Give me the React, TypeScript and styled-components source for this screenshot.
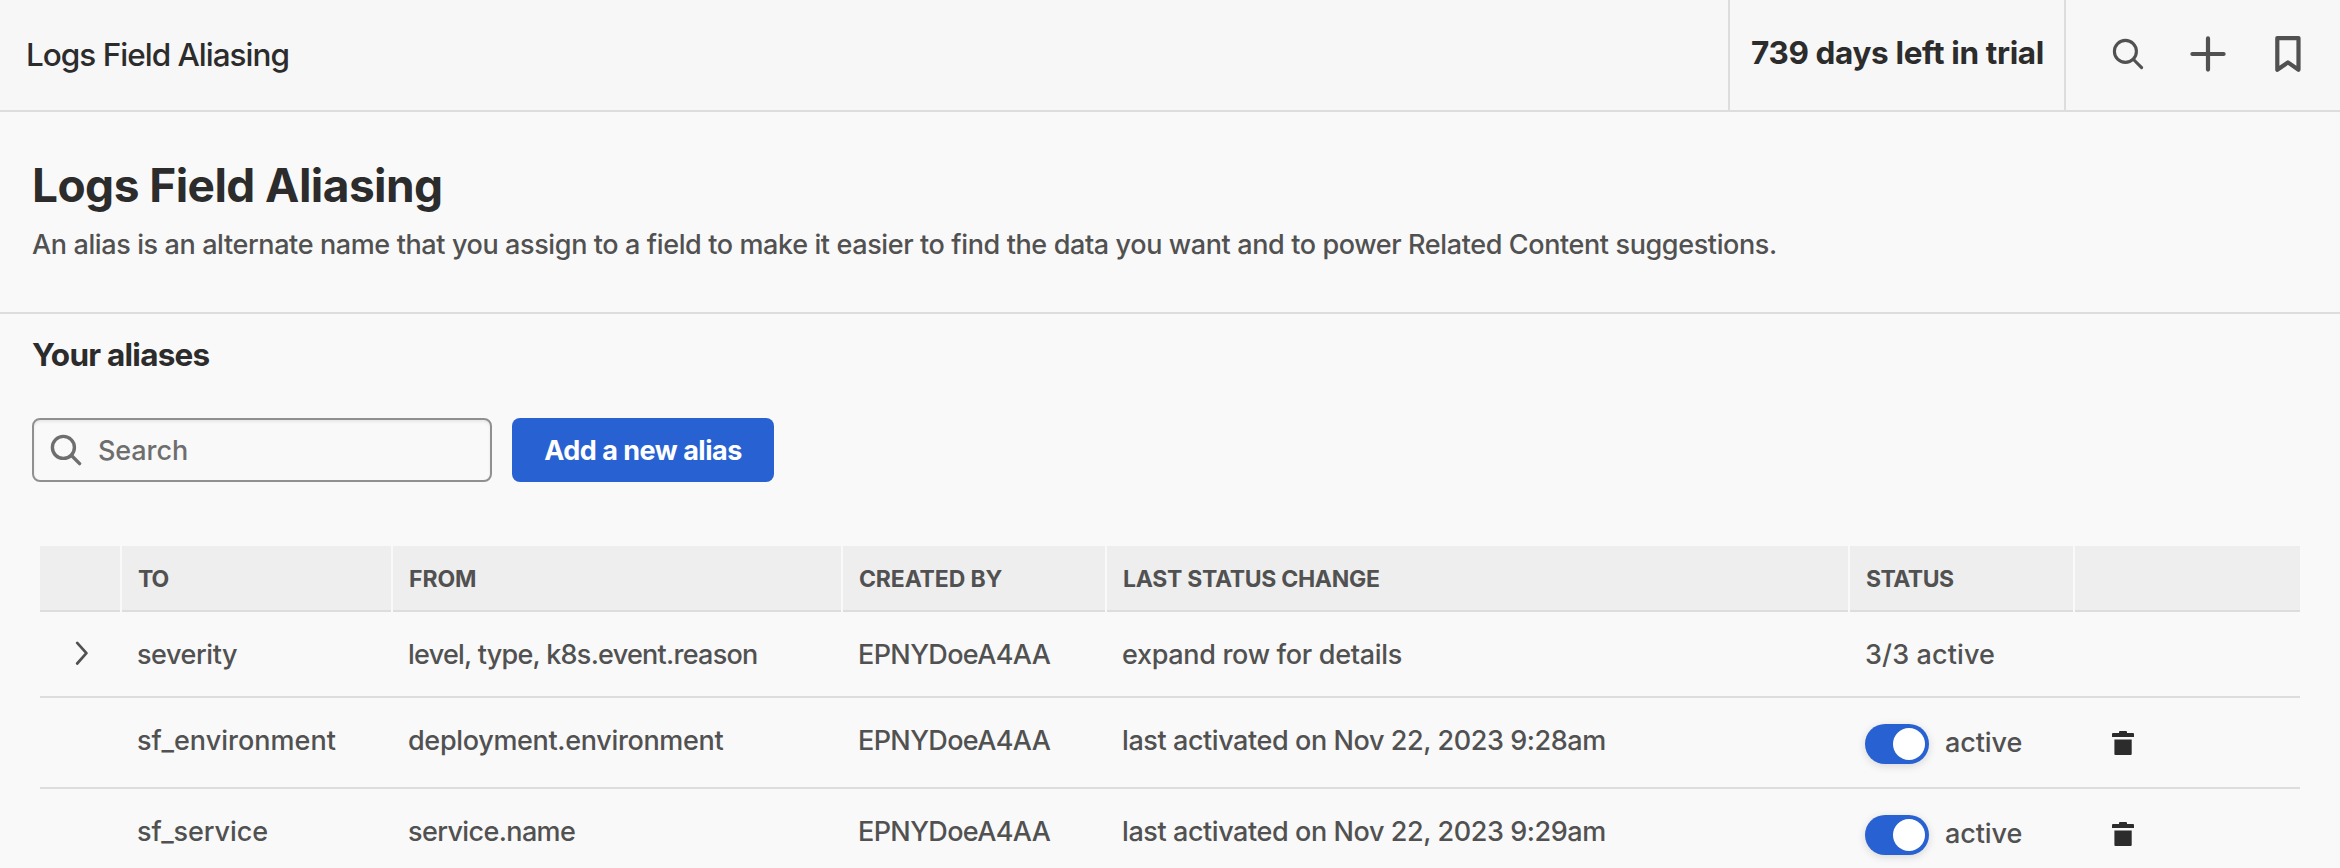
import React from 'react';
import styled, { createGlobalStyle } from 'styled-components';

const color = {
  page: '#f9f9f9',
  bar: '#f7f7f7',
  line: '#dddddd',
  head: '#eeeeee',
  strong: '#2c2c2c',
  text: '#515151',
  muted: '#6e6e6e',
  blue: '#2861d2',
};

const GlobalStyle = createGlobalStyle`
  * { box-sizing: border-box; }
  body {
    margin: 0;
    background: ${color.page};
    font-family: Inter, "Liberation Sans", sans-serif;
    color: ${color.text};
  }
`;

const Page = styled.div`
  height: 868px;
  overflow: hidden;
  background: ${color.page};
`;

const TopBar = styled.header`
  display: flex;
  height: 112px;
  background: ${color.bar};
  border-bottom: 2px solid ${color.line};
  color: ${color.strong};
`;

const BarTitle = styled.div`
  flex: 1;
  padding-left: 26px;
  font-size: 31.5px;
  font-weight: 500;
  line-height: 110px;
  letter-spacing: -1px;
`;

const Trial = styled.div`
  width: 338px;
  padding-left: 21px;
  border-left: 2px solid ${color.line};
  border-right: 2px solid ${color.line};
  font-size: 31.5px;
  font-weight: 700;
  line-height: 105px;
  letter-spacing: -0.36px;
  white-space: nowrap;
`;

const BarActions = styled.div`
  display: flex;
  align-items: center;
  gap: 46px;
  width: 274px;
  padding: 0 0 2px 46px;
`;

const IconButton = styled.button`
  display: flex;
  padding: 0;
  border: 0;
  background: none;
  color: ${color.text};

  &:last-child {
    margin-left: 3px;
  }
`;

const Intro = styled.section`
  height: 202px;
  padding: 44px 32px 0;
  border-bottom: 2px solid ${color.line};
`;

const Heading = styled.h1`
  margin: 0 0 13px;
  font-size: 46px;
  font-weight: 700;
  line-height: 58px;
  letter-spacing: -0.55px;
  color: ${color.strong};
`;

const Description = styled.p`
  margin: 0;
  font-size: 27px;
  font-weight: 500;
  line-height: 36px;
  letter-spacing: -0.385px;
`;

const Aliases = styled.main`
  padding: 20px 40px 0 32px;
`;

const SectionTitle = styled.h2`
  margin: 0;
  font-size: 31.5px;
  font-weight: 700;
  line-height: 41px;
  letter-spacing: -0.75px;
  color: ${color.strong};
`;

const Controls = styled.div`
  display: flex;
  gap: 20px;
  margin-top: 43px;
`;

const SearchBox = styled.div`
  display: flex;
  align-items: center;
  gap: 16px;
  width: 460px;
  height: 64px;
  padding-left: 16px;
  border: 2px solid #909090;
  border-radius: 8px;
  box-shadow: inset 0 2px 3px rgba(0, 0, 0, 0.07);
  color: ${color.muted};
  font-size: 27px;
  font-weight: 500;
  letter-spacing: -0.1px;
`;

const AddButton = styled.button`
  width: 262px;
  height: 64px;
  padding: 0;
  border: 0;
  border-radius: 8px;
  background: ${color.blue};
  color: #ffffff;
  font-family: inherit;
  font-size: 27px;
  font-weight: 650;
  letter-spacing: -0.49px;
`;

const Table = styled.div`
  margin: 64px 0 0 8px;
`;

const Row = styled.div<{ $height?: number }>`
  display: grid;
  grid-template-columns: 82px 271px 450px 264px 743px 225px 225px;
  height: ${(p) => p.$height ?? 91}px;
  border-bottom: 2px solid ${color.line};
`;

const HeadRow = styled(Row)`
  border-bottom: 0;
`;

const HeadCell = styled.div<{ $spacing?: number }>`
  display: flex;
  background: linear-gradient(${color.head} 64px, ${color.line} 64px);
  padding-left: 16px;
  font-size: 23px;
  font-weight: 650;
  line-height: 66px;
  letter-spacing: ${(p) => p.$spacing ?? 0}px;

  &:not(:last-child) {
    border-right: 2px solid ${color.page};
  }
`;

const Cell = styled.div<{ $spacing?: number }>`
  padding-left: 15px;
  font-size: 27px;
  font-weight: 500;
  line-height: 85px;
  letter-spacing: ${(p) => p.$spacing ?? 0}px;
  white-space: nowrap;
`;

const ExpandCell = styled.div`
  padding: 29px 0 0 34px;
`;

const StatusCell = styled(Cell)`
  display: flex;
  gap: 16px;
  padding: 2px 0 0 15px;
`;

const Toggle = styled.span`
  display: flex;
  justify-content: flex-end;
  width: 64px;
  height: 40px;
  margin-top: 24px;
  padding: 4px;
  border-radius: 20px;
  background: ${color.blue};
  box-shadow: 0 2px 8px rgba(0, 0, 0, 0.14);
`;

const Knob = styled.span`
  width: 32px;
  height: 32px;
  border-radius: 50%;
  background: #ffffff;
`;

const TrashCell = styled.div`
  padding: 33px 0 0 37px;
  color: ${color.strong};
`;

const SearchIcon = ({ stroke }: { stroke: number }) => (
  <svg width="32" height="32" viewBox="0 0 32 32" fill="none" stroke="currentColor" strokeWidth={stroke} strokeLinecap="round">
    <circle cx="13.4" cy="13.4" r="11" />
    <path d="M21.5 21.5L29.6 29.6" />
  </svg>
);

const PlusIcon = () => (
  <svg width="36" height="36" viewBox="0 0 36 36" stroke="currentColor" strokeWidth="4.2" strokeLinecap="round">
    <path d="M18 2.4V33.6M2.4 18H33.6" />
  </svg>
);

const BookmarkIcon = () => (
  <svg width="26" height="36" viewBox="0 0 26 36" fill="none" stroke="currentColor" strokeWidth="4.2" strokeLinejoin="round">
    <path d="M2.3 2.1H23.5V33.8L12.9 26.4L2.3 33.8Z" />
  </svg>
);

const ChevronIcon = () => (
  <svg width="16" height="26" viewBox="0 0 16 26" fill="none" stroke={color.text} strokeWidth="2.7" strokeLinecap="round" strokeLinejoin="round">
    <path d="M3.2 1.9L12.4 12.2L3.2 22.5" />
  </svg>
);

const TrashIcon = () => (
  <svg width="22" height="24" viewBox="0 0 22 24" fill="currentColor">
    <path d="M7 2V1A1 1 0 0 1 8 0H14A1 1 0 0 1 15 1V2H21A1 1 0 0 1 22 3V6H0V3A1 1 0 0 1 1 2Z" />
    <path d="M2.4 8.4H19.7V23A1 1 0 0 1 18.7 24H3.4A1 1 0 0 1 2.4 23Z" />
  </svg>
);

interface Alias {
  to: string;
  toSpacing: number;
  from: string;
  fromSpacing: number;
  change: string;
}

const aliases: Alias[] = [
  {
    to: 'sf_environment',
    toSpacing: 0.02,
    from: 'deployment.environment',
    fromSpacing: -0.33,
    change: 'last activated on Nov 22, 2023 9:28am',
  },
  {
    to: 'sf_service',
    toSpacing: -0.1,
    from: 'service.name',
    fromSpacing: -0.62,
    change: 'last activated on Nov 22, 2023 9:29am',
  },
];

export default function App() {
  return (
    <Page>
      <GlobalStyle />
      <TopBar>
        <BarTitle>Logs Field Aliasing</BarTitle>
        <Trial>739 days left in trial</Trial>
        <BarActions>
          <IconButton aria-label="Search"><SearchIcon stroke={3.1} /></IconButton>
          <IconButton aria-label="Add"><PlusIcon /></IconButton>
          <IconButton aria-label="Bookmark"><BookmarkIcon /></IconButton>
        </BarActions>
      </TopBar>
      <Intro>
        <Heading>Logs Field Aliasing</Heading>
        <Description>
          An alias is an alternate name that you assign to a field to make it easier to find the data you want and to power Related Content suggestions.
        </Description>
      </Intro>
      <Aliases>
        <SectionTitle>Your aliases</SectionTitle>
        <Controls>
          <SearchBox>
            <SearchIcon stroke={3.4} />
            <span>Search</span>
          </SearchBox>
          <AddButton>Add a new alias</AddButton>
        </Controls>
        <Table>
          <HeadRow $height={66}>
            <HeadCell />
            <HeadCell $spacing={-1}>TO</HeadCell>
            <HeadCell $spacing={-0.11}>FROM</HeadCell>
            <HeadCell $spacing={-0.15}>CREATED BY</HeadCell>
            <HeadCell $spacing={-0.3}>LAST STATUS CHANGE</HeadCell>
            <HeadCell $spacing={-0.55}>STATUS</HeadCell>
            <HeadCell />
          </HeadRow>
          <Row $height={86}>
            <ExpandCell><ChevronIcon /></ExpandCell>
            <Cell $spacing={-0.44}>severity</Cell>
            <Cell $spacing={-0.74}>level, type, k8s.event.reason</Cell>
            <Cell $spacing={-0.63}>EPNYDoeA4AA</Cell>
            <Cell $spacing={-0.32}>expand row for details</Cell>
            <Cell $spacing={0.12}>3/3 active</Cell>
            <Cell />
          </Row>
          {aliases.map((a) => (
            <Row key={a.to}>
              <Cell />
              <Cell $spacing={a.toSpacing}>{a.to}</Cell>
              <Cell $spacing={a.fromSpacing}>{a.from}</Cell>
              <Cell $spacing={-0.63}>EPNYDoeA4AA</Cell>
              <Cell $spacing={-0.42}>{a.change}</Cell>
              <StatusCell $spacing={-0.08}>
                <Toggle><Knob /></Toggle>
                active
              </StatusCell>
              <TrashCell><TrashIcon /></TrashCell>
            </Row>
          ))}
        </Table>
      </Aliases>
    </Page>
  );
}
